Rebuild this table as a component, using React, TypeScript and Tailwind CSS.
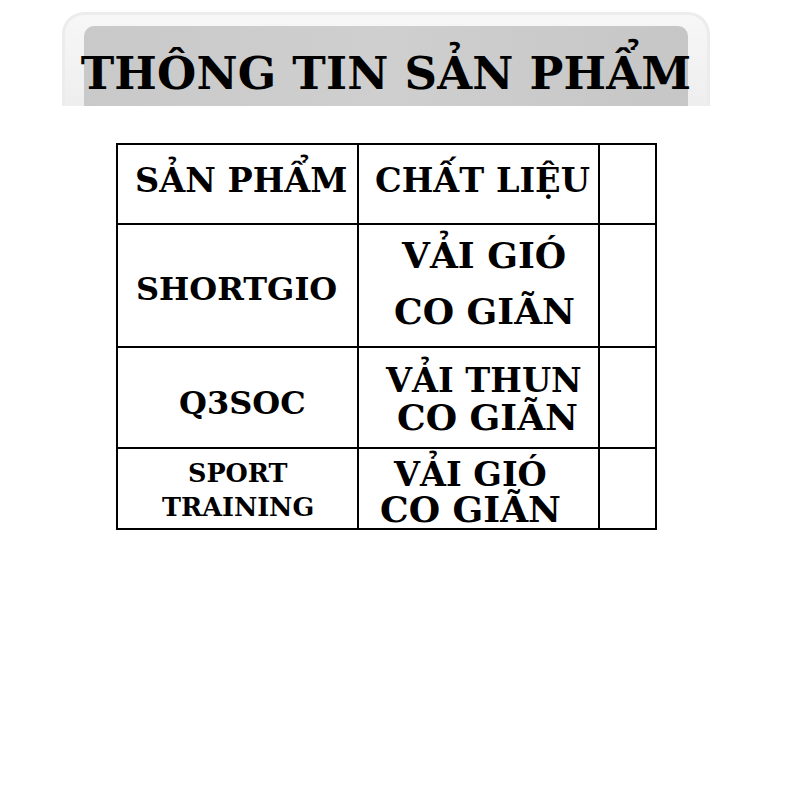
const font = { fontFamily: '"DejaVu Serif", "Liberation Serif", serif' };

type Row = {
  h: string;
  name: React.ReactNode;
  nameCls: string;
  mat: React.ReactNode;
  matCls: string;
};

const rows: Row[] = [
  {
    h: "h-[121px]",
    name: "SHORTGIO",
    nameCls: "text-[32px] pl-[18px] pt-[6px]",
    mat: (
      <>
        <div className="pl-[8px] text-[36px]">VẢI GIÓ</div>
        <div className="mt-[20px] text-[36px]">CO GIÃN</div>
      </>
    ),
    matCls: "leading-[36px] pl-[35px] pb-[6px]",
  },
  {
    h: "h-[99px]",
    name: "Q3SOC",
    nameCls: "text-[32px] pl-[61px] pt-[10px]",
    mat: (
      <>
        <div className="text-[33.5px]">VẢI THUN</div>
        <div className="pl-[11px] text-[36px]">CO GIÃN</div>
      </>
    ),
    matCls: "leading-[36px] pl-[27px] pt-[2px]",
  },
  {
    h: "h-[79px]",
    name: (
      <>
        <div className="pl-[26px]">SPORT</div>
        <div>TRAINING</div>
      </>
    ),
    nameCls: "text-[25.5px] leading-[34px] pl-[44px] pt-[2px] text-left",
    mat: (
      <>
        <div className="pl-[14px] text-[33.5px]">VẢI GIÓ</div>
        <div className="text-[36px]">CO GIÃN</div>
      </>
    ),
    matCls: "leading-[34px] pl-[21px] pt-[6px] text-left",
  },
];

export default function App() {
  return (
    <div className="min-h-[800px] w-[800px] bg-white text-black" style={font}>
      {/* Banner */}
      <div className="pt-[12px] pl-[62px]">
        <div className="flex h-[94px] w-[648px] flex-col rounded-t-[22px] border-x-[3px] border-t-[3px] border-[#ececec] bg-gradient-to-b from-[#f7f7f7] to-[#eeeeee] px-[19px] pt-[11px]">
          <div className="flex flex-1 items-center justify-center rounded-t-[10px] bg-gradient-to-r from-[#c9c9c9] via-[#cfcfcf] to-[#c6c6c6]">
            <h1 className="whitespace-nowrap pt-[14px] text-[45px] font-bold leading-none tracking-[0.2px]">
              THÔNG TIN SẢN PHẨM
            </h1>
          </div>
        </div>
      </div>

      {/* Table */}
      <div className="pl-[116px] pt-[37px]">
        <div className="grid w-[541px] grid-cols-[239px_239px_55px] gap-[2px] border-2 border-black bg-black font-bold">
          <div className="flex h-[78px] items-center bg-white pb-[6px] pl-[17px] text-[33.5px]">
            SẢN PHẨM
          </div>
          <div className="flex h-[78px] items-center bg-white pb-[6px] pl-[16px] text-[33.5px]">
            CHẤT LIỆU
          </div>
          <div className="h-[78px] bg-white" />
          {rows.map((r, i) => (
            <div key={i} className="contents">
              <div className={`flex flex-col justify-center bg-white ${r.h} ${r.nameCls}`}>
                {r.name}
              </div>
              <div className={`flex flex-col justify-center bg-white ${r.h} ${r.matCls}`}>
                {r.mat}
              </div>
              <div className={`bg-white ${r.h}`} />
            </div>
          ))}
        </div>
      </div>
    </div>
  );
}
